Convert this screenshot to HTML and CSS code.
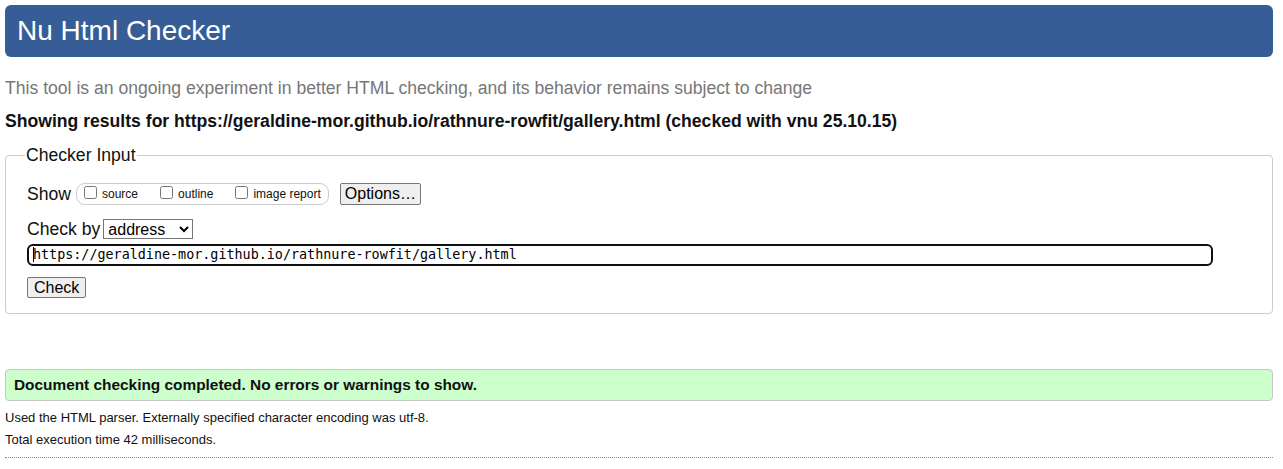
FILE: index.html
```html
<!DOCTYPE html>
<html lang="en">
<head>
<meta charset="utf-8">
<title>Nu Html Checker</title>
<link rel="stylesheet" href="styles.css">
</head>
<body>
<h1 class="title">Nu Html Checker</h1>
<p class="tagline">This tool is an ongoing experiment in better HTML checking, and its behavior remains subject to change</p>
<p class="showing">Showing results for https://geraldine-mor.github.io/rathnure-rowfit/gallery.html (checked with vnu 25.10.15)</p>
<fieldset class="input-box">
  <legend class="legend">Checker Input</legend>
  <div class="row show-row">
    <span class="label">Show</span>
    <span class="opts">
      <label class="opt"><input type="checkbox">source</label>
      <label class="opt"><input type="checkbox">outline</label>
      <label class="opt"><input type="checkbox">image report</label>
    </span>
    <button class="btn opt-btn">Options…</button>
  </div>
  <div class="row by-row">
    <span class="label">Check by</span>
    <select class="sel"><option>address</option></select>
  </div>
  <div class="url"><span class="caret"></span>https://geraldine-mor.github.io/rathnure-rowfit/gallery.html</div>
  <div class="row check-row"><button class="btn">Check</button></div>
</fieldset>
<p class="success">Document checking completed. No errors or warnings to show.</p>
<p class="details">Used the HTML parser. Externally specified character encoding was utf-8.</p>
<p class="details">Total execution time 42 milliseconds.</p>
<hr class="rule">
</body>
</html>
```
FILE: styles.css
```css
html { background: #fff; }
body {
  margin: 5px 10px 5px 5px;
  font-family: "Liberation Sans", Arial, sans-serif;
  color: #111;
}
.title {
  margin: 0;
  background: #365d95;
  color: #fff;
  font-weight: normal;
  font-size: 28px;
  line-height: 52px;
  height: 52px;
  padding: 0 12px;
  border-radius: 6px;
}
.tagline {
  margin: 20px 0 0;
  color: #777;
  font-size: 17.6px;
  line-height: 22px;
}
.showing {
  margin: 11px 0 0;
  font-weight: bold;
  font-size: 17.6px;
  line-height: 22px;
}
.input-box {
  margin: 13px 0 0;
  padding: 17px 21px 15px;
  border: 1px solid #ccc;
  border-radius: 4px;
}
.legend {
  font-size: 17.6px;
  padding: 0 1px;
  margin-left: -2px;
  line-height: 20px;
}
.row {
  display: flex;
  align-items: center;
}
.label {
  font-size: 17.6px;
  line-height: 20px;
}
.show-row { height: 24px; }
.opts {
  display: inline-flex;
  align-items: center;
  margin-left: 5px;
  height: 20px;
  border: 1px solid #ccc;
  border-radius: 9px;
  padding: 0 7px 0 4px;
  gap: 19px;
}
.opt {
  font-size: 12px;
  display: inline-flex;
  align-items: center;
  line-height: 14px;
}
.opt input {
  width: 13px;
  height: 13px;
  margin: 0 5px 3px 3px;
}
.btn {
  font-family: "Liberation Sans", Arial, sans-serif;
  font-size: 16px;
  height: 22px;
  padding: 0 6px;
  background: #efefef;
  border: 1px solid #767676;
  border-radius: 2px;
  color: #000;
}
.opt-btn { margin-left: 11px; padding: 0 4px; }
.by-row { margin-top: 12px; height: 22px; }
.sel {
  margin-left: 3px;
  width: 90px;
  height: 20px;
  font-family: "Liberation Sans", Arial, sans-serif;
  font-size: 16px;
  border: 1px solid #767676;
  border-radius: 0;
  background: #fff;
  color: #000;
}
.url {
  margin-top: 4px;
  width: 1186px;
  height: 22px;
  box-sizing: border-box;
  border: 2px solid #101010;
  border-radius: 6px;
  font-family: "DejaVu Sans Mono", monospace;
  font-size: 13.4px;
  line-height: 18px;
  padding-left: 4px;
  color: #000;
  white-space: nowrap;
}
.caret {
  display: inline-block;
  width: 1px;
  height: 15px;
  background: #000;
  vertical-align: -3px;
  margin-right: -1px;
}
.check-row { margin-top: 11px; }
.check-row .btn { height: 21px; }
.success {
  margin: 55px 0 0;
  background: #ccffcc;
  border: 1px solid #c6c6c6;
  border-radius: 4px;
  font-weight: bold;
  font-size: 15.4px;
  line-height: 30px;
  padding: 0 8px;
}
.details {
  margin: 8px 0 0;
  font-size: 13px;
  line-height: 18px;
}
.details + .details { margin-top: 4px; }
.rule {
  margin: 8px 0 0;
  border: 0;
  border-top: 1px dotted #888;
}
```
